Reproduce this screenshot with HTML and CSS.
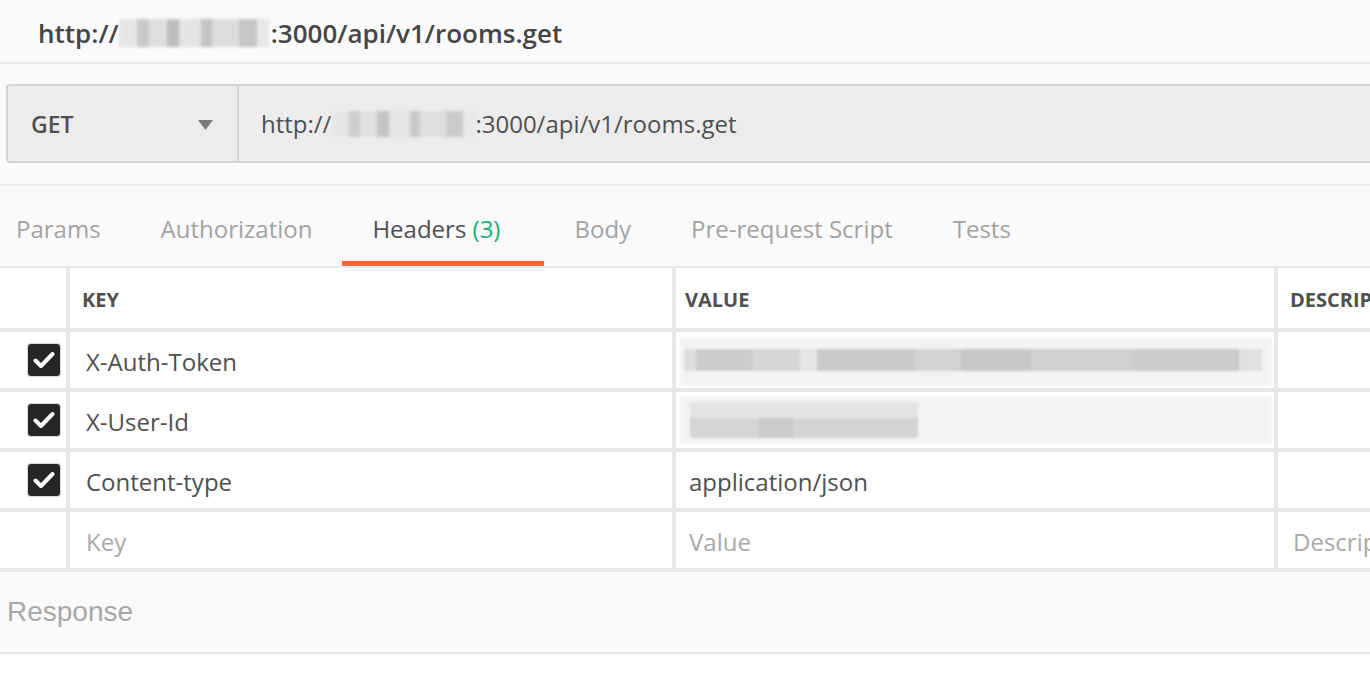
FILE: index.html
```html
<!DOCTYPE html>
<html>
<head>
<meta charset="utf-8">
<link rel="stylesheet" href="styles.css">
</head>
<body>
<div class="page">
  <div class="title-bar">
    <span class="title">http://<span class="redact redact-title"></span>:3000/api/v1/rooms.get</span>
  </div>

  <div class="request-area">
    <div class="request-bar">
      <div class="method">
        <span>GET</span>
        <svg class="caret" width="15" height="10" viewBox="0 0 15 10"><path d="M0 0 H15 L7.5 10 Z" fill="#7b7b7b"/></svg>
      </div>
      <div class="url">http://<span class="redact redact-url"></span>:3000/api/v1/rooms.get</div>
    </div>
  </div>

  <div class="tabs">
    <div class="tab first">Params</div>
    <div class="tab">Authorization</div>
    <div class="tab active">Headers <span class="count">(3)</span></div>
    <div class="tab">Body</div>
    <div class="tab">Pre-request Script</div>
    <div class="tab">Tests</div>
  </div>

  <div class="grid">
    <div class="cell"></div>
    <div class="cell head key-col">KEY</div>
    <div class="cell head val-col">VALUE</div>
    <div class="cell head desc-col">DESCRIPTION</div>

    <div class="cell check-cell"><span class="checkbox"><svg width="22" height="18" viewBox="0 0 22 18"><path d="M2.5 9.5 L8 15 L19.5 3" fill="none" stroke="#fff" stroke-width="4" stroke-linecap="round" stroke-linejoin="round"/></svg></span></div>
    <div class="cell key-col">X-Auth-Token</div>
    <div class="cell value-cell"><div class="blur-wrap"><div class="blur-outer one"><div class="blur-inner one"></div></div></div></div>
    <div class="cell"></div>

    <div class="cell check-cell"><span class="checkbox"><svg width="22" height="18" viewBox="0 0 22 18"><path d="M2.5 9.5 L8 15 L19.5 3" fill="none" stroke="#fff" stroke-width="4" stroke-linecap="round" stroke-linejoin="round"/></svg></span></div>
    <div class="cell key-col">X-User-Id</div>
    <div class="cell value-cell"><div class="blur-wrap"><div class="blur-outer two"><div class="blur-top"></div><div class="blur-inner two"></div></div></div></div>
    <div class="cell"></div>

    <div class="cell check-cell"><span class="checkbox"><svg width="22" height="18" viewBox="0 0 22 18"><path d="M2.5 9.5 L8 15 L19.5 3" fill="none" stroke="#fff" stroke-width="4" stroke-linecap="round" stroke-linejoin="round"/></svg></span></div>
    <div class="cell key-col">Content-type</div>
    <div class="cell val-col">application/json</div>
    <div class="cell"></div>

    <div class="cell"></div>
    <div class="cell placeholder key-col">Key</div>
    <div class="cell placeholder val-col">Value</div>
    <div class="cell placeholder desc-col">Description</div>
  </div>

  <div class="response">Response</div>
</div>
</body>
</html>
```

FILE: styles.css
```css
html, body {
  margin: 0;
  padding: 0;
  background: #ffffff;
  overflow: hidden;
}

.page {
  width: 1370px;
  height: 676px;
  overflow: hidden;
  font-family: "Open Sans", "Liberation Sans", sans-serif;
  color: #505050;
}

.title-bar {
  height: 62px;
  background: #fafafa;
  border-bottom: 2px solid #e8e8e8;
  display: flex;
  align-items: center;
  padding-left: 38px;
}

.title {
  font-size: 26px;
  font-weight: 600;
  color: #454545;
  display: flex;
  align-items: center;
  line-height: 1;
  padding-top: 4px;
}

.redact {
  display: inline-block;
  background:
    linear-gradient(90deg, #e6e6e6 0 12%, #c9c9c9 12% 20%, #dedede 20% 32%, #bdbdbd 32% 40%, #e4e4e4 40% 55%, #c4c4c4 55% 62%, #dcdcdc 62% 80%, #c6c6c6 80% 92%, #e8e8e8 92% 100%);
  filter: blur(1.5px);
}

.redact-title {
  width: 150px;
  height: 28px;
  margin: 0 2px 0 0;
}

.redact-url {
  width: 142px;
  height: 26px;
  margin: 0 1px;
  opacity: 0.85;
}

.request-area {
  background: #fafafa;
  padding: 20px 0 21px 6px;
  border-bottom: 2px solid #ececec;
}

.request-bar {
  height: 75px;
  width: 1400px;
  display: flex;
  background: #ececec;
  border: 2px solid #d3d3d3;
  border-right: none;
  border-radius: 4px 0 0 4px;
}

.method {
  width: 231px;
  border-right: 2px solid #d6d6d6;
  display: flex;
  align-items: center;
  justify-content: space-between;
  padding: 0 24px 0 23px;
  box-sizing: border-box;
  font-size: 23px;
  font-weight: 600;
  color: #505050;
}

.caret {
  margin-top: 2px;
}

.url {
  display: flex;
  align-items: center;
  padding-left: 22px;
  font-size: 24px;
  color: #505050;
}

.tabs {
  height: 80px;
  background: #fafafa;
  display: flex;
  align-items: stretch;
  margin-left: -14px;
}

.tab {
  padding: 0 30px;
  display: flex;
  align-items: center;
  font-size: 24px;
  color: #a3a3a3;
  padding-top: 10px;
  box-sizing: border-box;
  border-bottom: 5px solid transparent;
}

.tab.active {
  color: #505050;
  border-bottom-color: #fb6330;
  padding-right: 44px;
  white-space: pre;
}

.count {
  color: #18b07b;
}

.grid {
  display: grid;
  grid-template-columns: 66px 602px 598px 200px;
  grid-template-rows: 60px 56px 56px 56px 56px;
  gap: 4px;
  background: #e8e8e8;
  padding: 2px 0 4px 0;
}

.cell {
  background: #ffffff;
  display: flex;
  align-items: center;
  padding-left: 15px;
  font-size: 24px;
  color: #505050;
  white-space: nowrap;
  overflow: hidden;
  padding-top: 2px;
}

.cell.key-col {
  padding-left: 16px;
}

.cell.val-col {
  padding-left: 13px;
}

.cell.desc-col {
  padding-left: 15px;
}

.cell.head {
  font-size: 20px;
  font-weight: 700;
  color: #505050;
}

.cell.head.key-col {
  padding-left: 12px;
}

.cell.head.val-col {
  padding-left: 9px;
}

.cell.head.desc-col {
  padding-left: 12px;
}

.cell.value-cell {
  padding-left: 0;
  padding-top: 0;
  align-items: stretch;
}

.check-cell {
  padding-left: 27px;
  padding-top: 0;
}

.checkbox {
  width: 32px;
  height: 32px;
  background: #262626;
  border: 1px solid #d8d8d8;
  border-radius: 4px;
  display: flex;
  align-items: center;
  justify-content: center;
}

.placeholder {
  color: #a9a9a9;
}

.blur-wrap {
  width: 100%;
  position: relative;
}

.blur-outer {
  position: absolute;
  background: #f3f3f3;
  filter: blur(1px);
}

.blur-outer.one {
  left: 4px;
  top: 6px;
  width: 592px;
  height: 48px;
}

.blur-inner.one {
  position: absolute;
  left: 4px;
  top: 11px;
  width: 578px;
  height: 22px;
  background: linear-gradient(90deg, #dedede 0 2%, #cdcdcd 2% 12%, #d6d6d6 12% 20%, #e6e6e6 20% 23%, #cacaca 23% 40%, #d3d3d3 40% 48%, #c6c6c6 48% 60%, #d0d0d0 60% 78%, #cbcbcb 78% 96%, #e0e0e0 96% 100%);
}

.blur-outer.two {
  left: 4px;
  top: 4px;
  width: 592px;
  height: 48px;
}

.blur-top {
  position: absolute;
  left: 10px;
  top: 6px;
  width: 228px;
  height: 16px;
  background: #e4e4e4;
}

.blur-inner.two {
  position: absolute;
  left: 10px;
  top: 22px;
  width: 228px;
  height: 20px;
  background: linear-gradient(90deg, #d6d6d6 0 30%, #cbcbcb 30% 45%, #d4d4d4 45% 100%);
}

.response {
  height: 80px;
  background: #fafafa;
  border-bottom: 2px solid #e6e6e6;
  display: flex;
  align-items: center;
  padding-left: 7px;
  font-family: "Liberation Sans", Arial, sans-serif;
  font-size: 28px;
  color: #a8a8a8;
}
```
